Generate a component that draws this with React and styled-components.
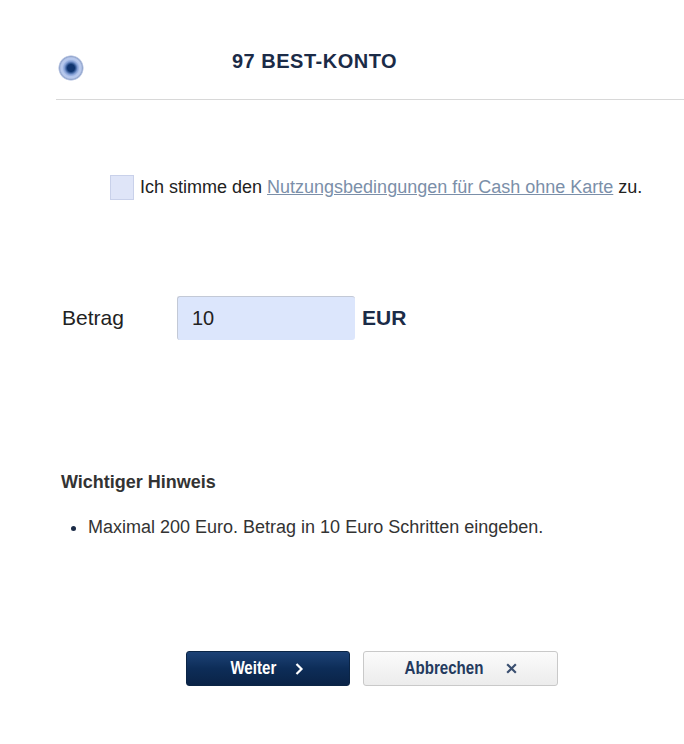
import React from "react";
import styled, { createGlobalStyle } from "styled-components";

const Global = createGlobalStyle`
  body {
    margin: 0;
    background: #fff;
    font-family: "Liberation Sans", Arial, sans-serif;
    color: #333;
  }
`;

const Page = styled.div`
  width: 684px;
  height: 744px;
  display: flex;
  flex-direction: column;
`;

const Header = styled.div`
  display: flex;
  align-items: flex-start;
  margin-left: 56px;
  padding: 50px 0 18px 2px;
  border-bottom: 1px solid #d8d8d8;
`;

const Radio = styled.span`
  width: 26px;
  height: 26px;
  margin-top: 5px;
  border-radius: 50%;
  background: radial-gradient(
    circle,
    #0f346f 0 3.5px,
    #2d538f 4.5px,
    #7f9bd2 6.5px,
    #b2c5ec 8.5px,
    #b9c9ec 10px,
    #95a8cf 11.5px,
    #d3dbee 12.5px,
    #ffffff 13px
  );
  flex-shrink: 0;
`;

const Title = styled.h1`
  margin: 0 0 0 148px;
  font-size: 20px;
  line-height: 22px;
  font-weight: bold;
  letter-spacing: 0.5px;
  color: #1b2b47;
`;

const ConsentRow = styled.label`
  display: flex;
  align-items: center;
  margin: 75px 0 0 110px;
  font-size: 18px;
  line-height: 21px;
  color: #222;
`;

const Checkbox = styled.span`
  width: 22px;
  height: 23px;
  background: #dfe5f8;
  border: 1px solid #c9d1ea;
  margin-right: 6px;
  flex-shrink: 0;
`;

const TermsLink = styled.a`
  color: #7b8fa9;
  text-decoration: underline;
`;

const AmountRow = styled.div`
  display: flex;
  align-items: center;
  margin: 96px 0 0 62px;
`;

const Label = styled.span`
  width: 115px;
  font-size: 21px;
  color: #222;
`;

const AmountInput = styled.div`
  width: 163px;
  height: 43px;
  padding-left: 14px;
  display: flex;
  align-items: center;
  background: #dce6fc;
  border-top: 1px solid #c3c9d6;
  border-left: 1px solid #c3c9d6;
  border-radius: 3px;
  font-size: 20px;
  color: #222;
`;

const Unit = styled.span`
  margin-left: 7px;
  font-size: 21px;
  font-weight: bold;
  color: #1b2b47;
`;

const Notice = styled.section`
  margin: 132px 0 0 61px;
`;

const NoticeTitle = styled.h2`
  margin: 0;
  font-size: 18px;
  line-height: 21px;
  font-weight: bold;
  color: #333;
`;

const NoticeList = styled.ul`
  margin: 24px 0 0;
  padding-left: 27px;
  font-size: 18px;
  line-height: 21px;
  color: #333;

  li::marker {
    color: #1b2b47;
  }
`;

const Actions = styled.div`
  display: flex;
  gap: 13px;
  margin: 113px 0 0 186px;
`;

const Button = styled.button`
  width: ${({ $w }) => $w}px;
  height: 35px;
  display: flex;
  align-items: center;
  justify-content: center;
  gap: 19px;
  padding: 0;
  border-radius: 3px;
  font-family: "Liberation Sans", Arial, sans-serif;
  font-size: 18px;
  font-weight: bold;
  cursor: pointer;
  ${({ $primary }) =>
    $primary
      ? `
    color: #fff;
    border: 1px solid #0b2546;
    background: linear-gradient(#1d4276, #0d2d58 50%, #0a2347);
  `
      : `
    color: #243a5e;
    border: 1px solid #c9c9c9;
    background: linear-gradient(#fbfbfb, #ececec);
  `}
`;

const ButtonLabel = styled.span`
  display: inline-block;
  transform: scaleX(0.84);
  margin: 0 -6px;
`;

export default function App() {
  return (
    <>
      <Global />
      <Page>
        <Header>
          <Radio />
          <Title>97 BEST-KONTO</Title>
        </Header>

        <ConsentRow>
          <Checkbox />
          Ich stimme den&nbsp;<TermsLink href="#">Nutzungsbedingungen für Cash ohne Karte </TermsLink>&nbsp;zu.
        </ConsentRow>

        <AmountRow>
          <Label>Betrag</Label>
          <AmountInput>10</AmountInput>
          <Unit>EUR</Unit>
        </AmountRow>

        <Notice>
          <NoticeTitle>Wichtiger Hinweis</NoticeTitle>
          <NoticeList>
            <li>Maximal 200 Euro. Betrag in 10 Euro Schritten eingeben.</li>
          </NoticeList>
        </Notice>

        <Actions>
          <Button $primary $w={164}>
            <ButtonLabel>Weiter</ButtonLabel>
            <svg width="10" height="14" viewBox="0 0 10 14">
              <path d="M2.5 2l5 5-5 5" fill="none" stroke="#fff" strokeWidth="2.2" />
            </svg>
          </Button>
          <Button $w={195}>
            <ButtonLabel>Abbrechen</ButtonLabel>
            <svg width="13" height="13" viewBox="0 0 12 12">
              <path d="M2 2l8 8M10 2l-8 8" stroke="#3a4f70" strokeWidth="2" />
            </svg>
          </Button>
        </Actions>
      </Page>
    </>
  );
}
